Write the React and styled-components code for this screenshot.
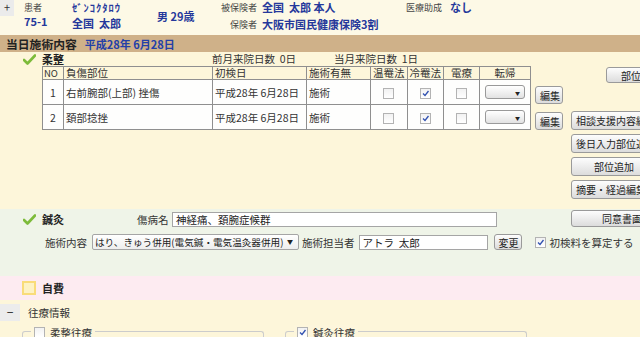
import React from 'react';
import styled, { createGlobalStyle } from 'styled-components';

const GlobalStyle = createGlobalStyle`
  body {
    margin: 0;
    overflow: hidden;
    font-family: "Noto Sans CJK JP", "Noto Sans", sans-serif;
    font-size: 11px;
    color: #222;
    background: #fdf6dc;
  }
`;

const Page = styled.div`
  width: 720px;
`;

// header
const Header = styled.div`
  display: flex;
  height: 35px;
  background: #fdf9e6;
`;

const PlusBox = styled.div`
  width: 14px;
  height: 16px;
  background: #ebebeb;
  color: #333;
  font-size: 11px;
  line-height: 15px;
  text-align: center;
  margin-right: 10px;
`;

const HeadCol = styled.div`
  width: ${p => p.w}px;
  display: flex;
  flex-direction: column;
  align-items: ${p => (p.right ? 'flex-end' : 'flex-start')};
  padding-right: ${p => (p.right ? 5 : 0)}px;
  padding-top: ${p => p.top ?? 2}px;
  gap: ${p => p.gap ?? 3}px;
`;

const Label = styled.span`
  font-size: 9px;
  color: #444;
  line-height: 12px;
  white-space: nowrap;
`;

const Value = styled.span`
  font-size: ${p => p.size || 11}px;
  letter-spacing: ${p => p.ls || 0}px;
  font-weight: bold;
  color: #25389b;
  line-height: 14px;
  white-space: nowrap;
`;

const DateBar = styled.div`
  height: 17px;
  background: #cfb189;
  display: flex;
  align-items: center;
  padding-left: 6px;
  gap: 8px;
  font-weight: bold;
  font-size: 11.8px;
`;

const DateText = styled.span`
  color: #2340a8;
  font-size: 11px;
`;

// sections
const Section = styled.div`
  background: ${p => p.bg};
  height: ${p => p.h}px;
  display: flex;
  flex-direction: ${p => (p.column ? 'column' : 'row')};
  box-sizing: border-box;
`;

const Main = styled.div`
  width: 571px;
  flex-shrink: 0;
  padding-left: 23px;
  box-sizing: border-box;
`;

const TitleRow = styled.div`
  display: flex;
  align-items: center;
  height: ${p => p.h || 14}px;
  margin-top: ${p => p.mt || 0}px;
  line-height: 12px;
`;

const Title = styled.span`
  font-weight: bold;
  font-size: 11px;
  width: ${p => p.w || 'auto'}px;
  margin-left: 6px;
  flex-shrink: 0;
`;

const Plain = styled.span`
  font-size: 10.5px;
  color: #333;
  white-space: nowrap;
  flex-shrink: 0;
  width: ${p => (p.w ? `${p.w}px` : 'auto')};
  margin-left: ${p => p.ml || 0}px;
`;

const TableRow = styled.div`
  display: flex;
  padding-left: 19px;
  gap: 4px;
`;

const Table = styled.table`
  border-collapse: collapse;
  font-size: 10.5px;
  color: #333;
  td, th {
    border: 1px solid #8f8f8f;
    padding: 0 2px;
    font-weight: normal;
    text-align: left;
    white-space: nowrap;
  }
  th { height: 12px; line-height: 12px; }
  td { height: 24px; background: #fefefd; }
`;

const Cell = styled.td`
  && { text-align: center; }
`;

const HeadCell = styled.th`
  width: ${p => p.w}px;
  && {
    text-align: ${p => (p.center ? 'center' : 'left')};
    padding: 0 ${p => (p.tight ? 1 : 2)}px;
    font-size: ${p => (p.tight ? 9.5 : 10.5)}px;
  }
`;

const Check = styled.span`
  display: inline-block;
  width: 9px;
  height: 9px;
  border: 1px solid #b3b3b3;
  background: linear-gradient(#f2f2f2, #fff);
  position: relative;
  vertical-align: middle;
  flex-shrink: 0;
  svg { position: absolute; left: 0; top: 0; }
`;

const MiniSelect = styled.div`
  width: 40px;
  height: 14px;
  margin: 0 auto;
  border: 1px solid #999;
  border-radius: 3px;
  background: linear-gradient(#fff, #e2e2e2);
  box-sizing: border-box;
  display: flex;
  justify-content: flex-end;
  align-items: center;
  padding-right: 4px;
  font-size: 5px;
  color: #222;
`;

const EditCol = styled.div`
  display: flex;
  flex-direction: column;
  padding-top: 20px;
  gap: 8px;
`;

const Button = styled.button`
  font-family: inherit;
  font-size: 10px;
  color: #222;
  height: ${p => p.h || 18}px;
  width: ${p => p.w}px;
  padding: 0 4px;
  border: 1px solid #9a9a9a;
  border-radius: 3px;
  background: linear-gradient(#fdfdfd, #dcdcdc);
  white-space: nowrap;
  overflow: hidden;
  text-align: ${p => p.align || 'center'};
  flex-shrink: 0;
  margin-left: ${p => p.ml || 0}px;
  margin-top: ${p => p.mt || 0}px;
`;

const RightCol = styled.div`
  display: flex;
  flex-direction: column;
  padding-top: ${p => p.pt}px;
  gap: 4px;
`;

const FieldRow = styled.div`
  display: flex;
  align-items: center;
  height: 16px;
  margin-top: ${p => p.mt || 0}px;
  padding-left: ${p => p.pl || 0}px;
`;

const Input = styled.div`
  width: ${p => p.w}px;
  height: 15px;
  flex-shrink: 0;
  border: 1px solid #a5a5a5;
  background: #fff;
  box-sizing: border-box;
  font-size: 10.5px;
  line-height: 13px;
  padding-left: 3px;
  color: #222;
  margin-left: ${p => p.ml || 0}px;
  white-space: nowrap;
`;

const Select = styled.div`
  width: 207px;
  height: 16px;
  flex-shrink: 0;
  border: 1px solid #a5a5a5;
  background: linear-gradient(#fff, #eee);
  border-radius: 2px;
  box-sizing: border-box;
  font-size: 9.6px;
  line-height: 14px;
  padding-left: 2px;
  display: flex;
  justify-content: space-between;
  margin-left: 5px;
  white-space: nowrap;
  overflow: hidden;
  span:last-child { font-size: 6px; padding-right: 5px; }
`;

const CheckLabel = styled.label`
  display: flex;
  align-items: center;
  gap: 4px;
  margin-left: 13px;
  font-size: 10.5px;
  color: #333;
  white-space: nowrap;
`;

const YellowBox = styled.span`
  width: 10px;
  height: 10px;
  background: #fdf2c4;
  border: 2px solid #f9dc79;
  display: inline-block;
  margin-left: -1px;
`;

const MinusBox = styled.div`
  width: 20px;
  height: 17px;
  background: #ececec;
  text-align: center;
  line-height: 16px;
  margin-right: 8px;
  font-size: 12px;
`;

const FieldsetRow = styled.div`
  display: flex;
  padding-left: 22px;
  gap: 21px;
  margin-top: 10px;
`;

const Fieldset = styled.div`
  width: 240px;
  height: 20px;
  border: 1px solid #ccc;
  border-bottom: none;
  border-radius: 3px 3px 0 0;
  position: relative;
`;

const Legend = styled.div`
  position: absolute;
  left: 8px;
  top: -7px;
  background: #fdf6dc;
  padding: 0 3px;
  display: flex;
  align-items: center;
  gap: 5px;
  font-size: 10.5px;
  color: #333;
`;

const GreenCheck = () => (
  <svg width="13" height="11" viewBox="0 0 13 11" style={{ flexShrink: 0 }}>
    <path d="M1 6 L4.5 9.5 L12 1.5" fill="none" stroke="#7dbb3a" strokeWidth="2.6" strokeLinecap="round" strokeLinejoin="round" />
  </svg>
);

const Box = ({ on }) => (
  <Check>
    {on && (
      <svg width="9" height="9" viewBox="0 0 9 9">
        <path d="M2 4.5 L4 6.5 L7.5 2" fill="none" stroke="#3050b0" strokeWidth="1.3" />
      </svg>
    )}
  </Check>
);

const rows = [
  { no: 1, part: '右前腕部(上部) 挫傷' },
  { no: 2, part: '頚部捻挫' },
];

export default function App() {
  return (
    <Page>
      <GlobalStyle />
      <Header>
        <PlusBox>+</PlusBox>
        <HeadCol w={48} top={2} gap={0}>
          <Label>患者</Label>
          <Value>75-1</Value>
        </HeadCol>
        <HeadCol w={85} top={1} gap={1}>
          <Value size={10.5} ls={1}>ｾﾞﾝｺｸﾀﾛｳ</Value>
          <Value>全国&nbsp;&nbsp;太郎</Value>
        </HeadCol>
        <HeadCol w={55} top={9}>
          <Value>男 29歳</Value>
        </HeadCol>
        <HeadCol w={45} right top={2} gap={5}>
          <Label>被保険者</Label>
          <Label>保険者</Label>
        </HeadCol>
        <HeadCol w={144} top={0} gap={3}>
          <Value>全国&nbsp;&nbsp;太郎 本人</Value>
          <Value>大阪市国民健康保険3割</Value>
        </HeadCol>
        <HeadCol w={44} top={2}>
          <Label>医療助成</Label>
        </HeadCol>
        <HeadCol w={40} top={0}>
          <Value>なし</Value>
        </HeadCol>
      </Header>
      <DateBar>
        当日施術内容<DateText>平成28年 6月28日</DateText>
      </DateBar>

      <Section bg="#fdf6da" h={157}>
        <Main>
          <TitleRow>
            <GreenCheck />
            <Title w={170}>柔整</Title>
            <Plain w={122}>前月来院日数&nbsp;&nbsp;0日</Plain>
            <Plain>当月来院日数&nbsp;&nbsp;1日</Plain>
          </TitleRow>
          <TableRow>
            <Table>
              <thead>
                <tr>
                  <HeadCell w={18} tight>NO</HeadCell>
                  <HeadCell w={144}>負傷部位</HeadCell>
                  <HeadCell w={89}>初検日</HeadCell>
                  <HeadCell w={59}>施術有無</HeadCell>
                  <HeadCell w={31}>温罨法</HeadCell>
                  <HeadCell w={31}>冷罨法</HeadCell>
                  <HeadCell w={31} center>電療</HeadCell>
                  <HeadCell w={46} center>転帰</HeadCell>
                </tr>
              </thead>
              <tbody>
                {rows.map(r => (
                  <tr key={r.no}>
                    <Cell>{r.no}</Cell>
                    <td>{r.part}</td>
                    <td>平成28年 6月28日</td>
                    <td>施術</td>
                    <Cell><Box /></Cell>
                    <Cell><Box on /></Cell>
                    <Cell><Box /></Cell>
                    <Cell><MiniSelect>▼</MiniSelect></Cell>
                  </tr>
                ))}
              </tbody>
            </Table>
            <EditCol>
              <Button w={28}>編集</Button>
              <Button w={28}>編集</Button>
            </EditCol>
          </TableRow>
        </Main>
        <RightCol pt={15}>
          <Button w={70} ml={35} h={16}>部位詳細</Button>
          <Button w={86} h={19} mt={24} align="left">相談支援内容編集</Button>
          <Button w={86} h={19} align="left">後日入力部位追加</Button>
          <Button w={86} h={19}>部位追加</Button>
          <Button w={86} h={19} align="left">摘要・経過編集</Button>
        </RightCol>
      </Section>

      <Section bg="#eff4e8" h={67}>
        <Main>
          <FieldRow mt={2}>
            <GreenCheck />
            <Title w={95}>鍼灸</Title>
            <Plain w={32}>傷病名</Plain>
            <Input w={325} ml={3}>神経痛、頚腕症候群</Input>
          </FieldRow>
          <FieldRow mt={7} pl={22}>
            <Plain>施術内容</Plain>
            <Select>
              <span>はり、きゅう併用(電気鍼・電気温灸器併用)</span>
              <span>▼</span>
            </Select>
            <Plain ml={3}>施術担当者</Plain>
            <Input w={129} ml={4}>アトラ&nbsp;&nbsp;太郎</Input>
            <Button w={28} h={16} ml={6}>変更</Button>
            <CheckLabel><Box on />初検料を算定する</CheckLabel>
          </FieldRow>
        </Main>
        <RightCol pt={1}>
          <Button w={86} h={17} align="right">同意書画面</Button>
        </RightCol>
      </Section>

      <Section bg="#fdebf1" h={24}>
        <Main>
          <TitleRow h={24}>
            <YellowBox />
            <Title w={40}>自費</Title>
          </TitleRow>
        </Main>
      </Section>

      <Section bg="#fdf6da" h={37} column>
        <TitleRow h={17} mt={4}>
          <MinusBox>−</MinusBox>
          <Plain>往療情報</Plain>
        </TitleRow>
        <FieldsetRow>
          <Fieldset>
            <Legend><Box />柔整往療</Legend>
          </Fieldset>
          <Fieldset>
            <Legend><Box on />鍼灸往療</Legend>
          </Fieldset>
        </FieldsetRow>
      </Section>
    </Page>
  );
}
